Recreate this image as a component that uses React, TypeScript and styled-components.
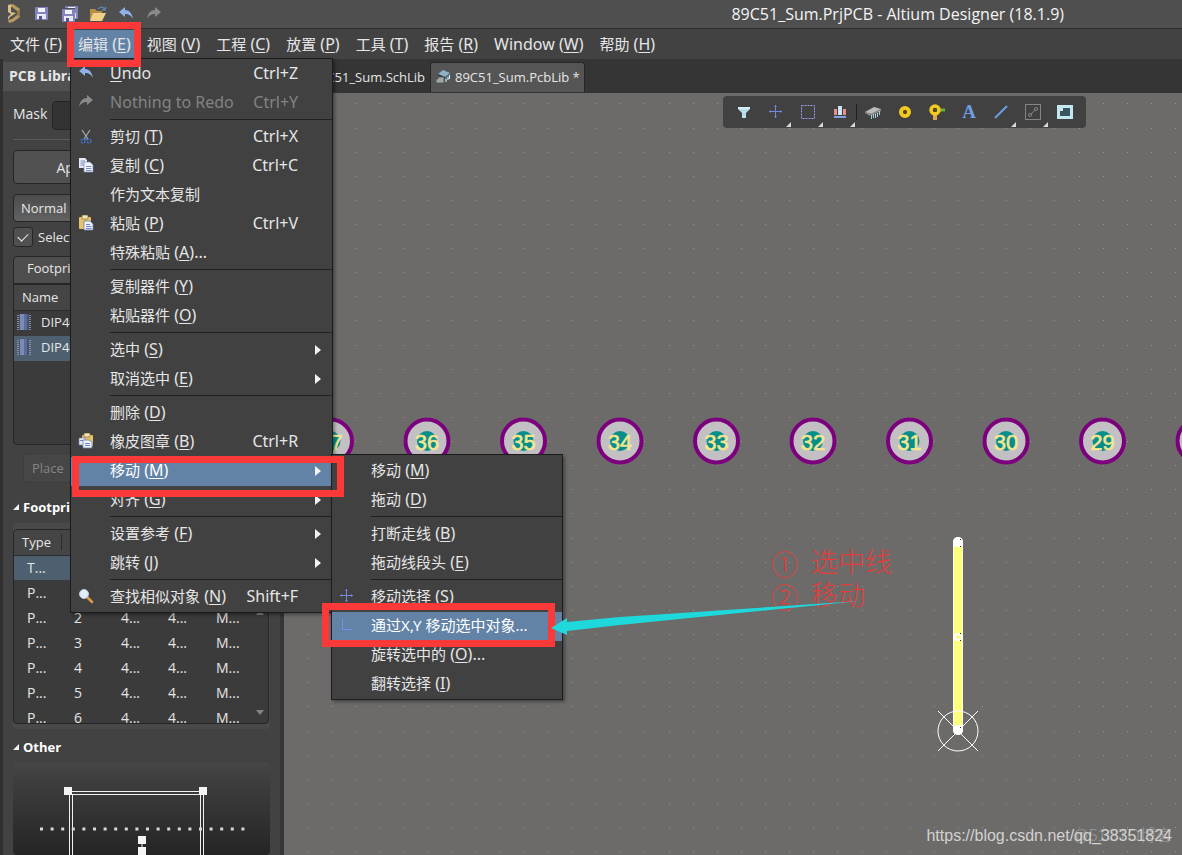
import React from "react";
import styled, { createGlobalStyle, css } from "styled-components";

const GlobalStyle = createGlobalStyle`
  * { box-sizing: border-box; }
  body { margin: 0; background: #353535; }
  button, input, select { font: inherit; color: inherit; }
  u { text-underline-offset: 2px; }
`;

const uiFont = `"Open Sans", "Noto Sans CJK SC", sans-serif`;
const menuFont = `"Noto Sans", "Noto Sans CJK SC", sans-serif`;

const Window = styled.div`
  position: relative;
  display: flex;
  flex-direction: column;
  height: 100vh;
  overflow: hidden;
  background: #353535;
  color: #e6e6e6;
  font-family: ${uiFont};
  font-size: 13px;
`;

/* ---------- title bar ---------- */

const TitleBar = styled.header`
  display: flex;
  flex: none;
  align-items: center;
  justify-content: space-between;
  height: 29px;
  padding-right: 118px;
  background: #4f4f4f;
  border-bottom: 1px solid #2e2e2e;
`;

const QuickAccess = styled.div`
  display: flex;
`;

const IconButton = styled.button`
  display: flex;
  align-items: center;
  justify-content: center;
  width: 28px;
  height: 28px;
  padding: 0;
  border: 0;
  background: none;
`;

const Title = styled.h1`
  margin: 0;
  font-size: 16px;
  line-height: 28px;
  font-weight: 400;
  color: #f4f4f4;
  white-space: nowrap;
`;

/* ---------- menu bar and menus ---------- */

const MenuBar = styled.nav`
  display: flex;
  flex: none;
  align-items: center;
  height: 30px;
  padding-left: 3px;
  background: #424242;
  font-family: ${menuFont};
`;

const MenuSlot = styled.div`
  position: relative;
  margin-right: 2px;
`;

const MenuTitle = styled.button<{ $open?: boolean }>`
  display: block;
  height: 28px;
  padding: 0 7px;
  border: 0;
  background: ${(p) => (p.$open ? "#6283a6" : "none")};
  font-size: 16px;
  line-height: 28px;
  white-space: nowrap;
`;

const Han = styled.span`
  font-size: 15px;
`;

const MenuPanel = styled.div<{ $sub?: boolean }>`
  position: absolute;
  z-index: 5;
  top: ${(p) => (p.$sub ? "-3px" : "28px")};
  left: ${(p) => (p.$sub ? "260px" : "-1px")};
  width: ${(p) => (p.$sub ? "232px" : "263px")};
  padding: ${(p) => (p.$sub ? "2px 0 0" : "1px 0 0")};
  background: #414141;
  border: 1px solid #1c1c1c;
  box-shadow: 2px 2px 3px rgba(0, 0, 0, 0.35);
  text-align: left;
`;

const MenuRow = styled.div`
  position: relative;
`;

const MenuItem = styled.button<{ $active?: boolean; $off?: boolean }>`
  display: grid;
  grid-template-columns: 39px 1fr auto 34px;
  align-items: center;
  width: 100%;
  height: 29px;
  padding: 0;
  border: 0;
  background: ${(p) => (p.$active ? "#6283a6" : "none")};
  color: ${(p) => (p.$off ? "#838383" : p.$active ? "#ffffff" : "#e6e6e6")};
  font-size: 16px;
  text-align: left;
  white-space: nowrap;
`;

const ItemText = styled.span`
  height: 29px;
  line-height: 26px;
`;

const ItemIcon = styled.span`
  display: flex;
  justify-content: center;
  padding: 0 10px 3px 0;
`;

const ItemArrow = styled.span`
  display: flex;
  padding: 0 0 2px 17px;
`;

const Divider = styled.hr`
  height: 5px;
  margin: 0 0 0 39px;
  border: 0;
  border-top: 1px solid #222222;
  transform: translateY(1px);
`;

/* ---------- body ---------- */

const Workspace = styled.main`
  display: flex;
  flex: 1;
  min-height: 0;
`;

const Panel = styled.aside`
  display: flex;
  flex: none;
  flex-direction: column;
  width: 284px;
  padding-top: 3px;
  background: #424242;
  border-left: 3px solid #303030;
  border-right: 4px solid #363636;
  white-space: nowrap;
`;

const PanelTitle = styled.h2`
  margin: 0;
  padding-left: 6px;
  height: 29px;
  background: #515151;
  font-size: 14px;
  line-height: 28px;
  font-weight: 700;
`;

const PanelBody = styled.div`
  display: flex;
  flex: 1;
  flex-direction: column;
  min-height: 0;
  padding: 10px 10px 0;
`;

const MaskRow = styled.label`
  display: flex;
  gap: 5px;
  height: 39px;
  padding-bottom: 9px;
  line-height: 26px;
  border-bottom: 1px solid #5a5a5a;
  font-size: 14px;
`;

const MaskInput = styled.input`
  flex: 1;
  min-width: 0;
  background: #333333;
  border: 1px solid #242424;
  border-radius: 4px;
`;

const ButtonRow = styled.div`
  display: flex;
  gap: 10px;
  padding: 10px 0;
`;

const PanelButton = styled.button`
  flex: 1;
  height: 34px;
  padding: 0 8px;
  border: 1px solid #262626;
  border-radius: 4px;
  background: #515151;
  font-size: 14px;
`;

const FootprintAction = styled.button`
  height: 30px;
  padding: 0 8px;
  border: 1px solid #3c3c3c;
  border-radius: 4px;
  background: #464646;
  color: #858585;
  font-size: 13px;
`;

const ModeSelect = styled.select`
  appearance: none;
  height: 28px;
  padding: 0 7px;
  border: 1px solid #262626;
  border-radius: 4px;
  background: linear-gradient(#4c4c4c, #626262);
  font-size: 13px;
`;

const CheckRow = styled.label`
  display: flex;
  align-items: center;
  gap: 5px;
  height: 20px;
  margin: 5px 0 9px;
`;

const CheckBox = styled.input`
  appearance: none;
  width: 20px;
  height: 20px;
  margin: 0;
  border: 1px solid #262626;
  border-radius: 3px;
  background: #505050;
  display: grid;
  place-items: center;
  &:checked::before {
    content: "";
    width: 9px;
    height: 5px;
    margin-bottom: 3px;
    border-left: 1px solid #f0f0f0;
    border-bottom: 1px solid #f0f0f0;
    transform: rotate(-45deg);
  }
`;

const GroupTitle = styled.h3`
  margin: 0;
  height: 28px;
  padding-left: 13px;
  background: #4e4e4e;
  border: 1px solid #262626;
  border-radius: 4px 4px 0 0;
  font-size: 13px;
  line-height: 23px;
  font-weight: 400;
`;

const listFrame = css`
  overflow: hidden;
  background: #3b3b3b;
  border: 1px solid #262626;
  border-radius: 0 0 4px 4px;
`;

const NameList = styled.div`
  ${listFrame}
  height: 161px;
  flex: none;
`;

const DataTable = styled.table`
  width: 100%;
  border-collapse: collapse;
  table-layout: fixed;
  font-size: 14px;
  th, td { height: 25px; padding: 0; font-weight: 400; text-align: left; line-height: 24px; }
  thead tr { background: #454545; }
  th { border-bottom: 1px solid #2c2c2c; }
`;

const NameHead = styled.th`
  && { padding-left: 8px; font-size: 13px; }
`;

const TypeLabel = styled.span`
  display: block;
  width: 40px;
  height: 16px;
  border-right: 1px solid #2c2c2c;
  line-height: 16px;
`;

const BodyRow = styled.tr<{ $selected?: boolean }>`
  background: ${(p) => (p.$selected ? "#4e6070" : "none")};
`;

const NameCell = styled.div`
  display: flex;
  align-items: center;
  gap: 9px;
  height: 25px;
  padding: 0 0 2px 2px;
  font-size: 13px;
`;

const PlaceRow = styled.div`
  display: flex;
  gap: 8px;
  padding: 8px 10px 12px;
`;

const SectionTitle = styled.h3`
  display: flex;
  align-items: center;
  gap: 4px;
  flex: none;
  height: 24px;
  margin: 0;
  font-size: 13px;
  font-weight: 700;
  color: #ffffff;
`;

const PrimitiveFrame = styled.div`
  flex: none;
  padding: 6px 1px 5px 0;
  margin: 4px 0 6px;
  background: #494949;
  border-radius: 4px;
`;

const PrimitiveList = styled.div`
  ${listFrame}
  display: flex;
  height: 195px;
  border-radius: 4px;
`;

const PrimitiveScroll = styled.div`
  display: flex;
  flex: none;
  flex-direction: column;
  justify-content: space-between;
  align-items: center;
  width: 17px;
  padding: 80px 0 7px;
`;

const PrimitiveCell = styled.td`
  && { padding-left: 13px; }
`;

const Preview = styled.div`
  flex: 1;
  min-height: 0;
  margin-top: 4px;
  overflow: hidden;
  background: linear-gradient(#484848 0, #424242 6px, #222222 100px);
  border-radius: 4px;
`;

const Documents = styled.section`
  display: flex;
  flex: 1;
  flex-direction: column;
  min-width: 0;
`;

const Tabs = styled.div`
  display: flex;
  align-items: flex-end;
  height: 34px;
  flex: none;
  padding-bottom: 1px;
`;

const Tab = styled.button<{ $active?: boolean }>`
  display: flex;
  align-items: center;
  gap: 4px;
  height: 30px;
  padding: 0 4px 2px;
  border: 1px solid ${(p) => (p.$active ? "#262626" : "transparent")};
  border-bottom: 0;
  border-radius: 3px 3px 0 0;
  background: ${(p) => (p.$active ? "#555555" : "none")};
  font-size: 13px;
  white-space: nowrap;
  ${(p) => !p.$active && "width: 146px; justify-content: flex-end;"}
`;

const Board = styled.div`
  position: relative;
  flex: 1;
  min-height: 0;
  overflow: hidden;
  background: #6c6b69;
`;

const BoardDrawing = styled.svg`
  display: block;
  width: 100%;
  height: 100%;
`;

const FloatingBar = styled.div`
  position: absolute;
  top: 3px;
  right: 96px;
  display: flex;
  height: 32px;
  padding: 0 5px;
  background: #414141;
  border-radius: 4px;
`;

const ToolButton = styled.button<{ $more?: boolean; $split?: boolean }>`
  position: relative;
  display: flex;
  align-items: center;
  justify-content: center;
  width: 32px;
  height: 32px;
  padding: 0;
  border: 0;
  background: none;
  ${(p) =>
    p.$more &&
    css`
      &::after {
        content: "";
        position: absolute;
        right: 1px;
        bottom: 1px;
        border-left: 5px solid transparent;
        border-bottom: 5px solid #d8d8d8;
      }
    `}
  ${(p) =>
    p.$split &&
    css`
      margin-right: 1px;
      &::before {
        content: "";
        position: absolute;
        right: -1px;
        top: 8px;
        height: 16px;
        border-right: 1px solid #202020;
      }
    `}
`;

/* ---------- annotations over the window ---------- */

const Highlight = styled.div<{ $x: number; $y: number; $w: number; $h: number }>`
  position: absolute;
  z-index: 10;
  left: ${(p) => p.$x}px;
  top: ${(p) => p.$y}px;
  width: ${(p) => p.$w}px;
  height: ${(p) => p.$h}px;
  border: 7px solid #fb3939;
  pointer-events: none;
`;

const ArrowLayer = styled.svg`
  position: absolute;
  z-index: 11;
  left: 550px;
  top: 595px;
  pointer-events: none;
`;

const Notes = styled.ol`
  position: absolute;
  z-index: 9;
  left: 771px;
  top: 547px;
  margin: 0;
  padding: 0;
  list-style: none;
  color: #e23c3c;
  font-family: "Liberation Serif", "Noto Sans CJK SC", serif;
  font-size: 27px;
  line-height: 33px;
  font-weight: 300;
`;

const Note = styled.li`
  display: flex;
  gap: 13px;
`;

const NoteMark = styled.span`
  font-family: "Noto Sans CJK SC", sans-serif;
`;

const Watermark = styled.div`
  position: absolute;
  z-index: 9;
  right: 10px;
  bottom: 7px;
  color: #d2d2d2;
  font-family: "Liberation Sans", "Noto Sans CJK SC", sans-serif;
  font-size: 16px;
  line-height: 24px;
`;

const Ghost = styled(Watermark)`
  z-index: 8;
  color: #8f8e8c;
`;

/* ---------- icons ---------- */

const Svg = ({ children, w = 16, h = 16 }: { children: React.ReactNode; w?: number; h?: number }) => (
  <svg width={w} height={h} viewBox={`0 0 ${w} ${h}`} fill="none" aria-hidden="true">
    {children}
  </svg>
);

const LogoIcon = () => (
  <Svg w={16} h={20}>
    <path d="M2 1L7 0L14 5V13L7 18L3 19L2 16L6 15L11 11V7L6 3L2 4Z" fill="#b89a5e" />
    <path d="M2 1L5 0.500V8L10 9L4 13L2 16V13L5 10L2 8Z" fill="#d9bf84" />
    <path d="M11 7L14 5V13L11 11Z" fill="#94794a" />
  </Svg>
);

const Floppy = ({ x, y }: { x: number; y: number }) => (
  <g transform={`translate(${x} ${y})`}>
    <rect width="13" height="13" rx="1" fill="#8583bd" />
    <rect x="3" y="1" width="7" height="4" fill="#f2f2fa" />
    <rect x="2" y="7" width="9" height="5" fill="#e8e8f6" />
    <rect x="4" y="9" width="3" height="4" fill="#55558c" />
  </g>
);

const SaveIcon = () => (
  <Svg>
    <Floppy x={1} y={1} />
  </Svg>
);

const SaveAllIcon = () => (
  <Svg w={18} h={18}>
    <Floppy x={4} y={1} />
    <path d="M0 3H14V17H0Z" fill="#4f4f4f" />
    <Floppy x={1} y={4} />
  </Svg>
);

const FolderIcon = () => (
  <Svg w={18}>
    <path d="M1 3H6L8 5H13V14H1Z" fill="#b98f45" />
    <path d="M4 7H17L13 15H1Z" fill="#f0cf86" />
    <path d="M9 3C12 0 15 1 16 4M16 4L17 1M16 4L13 4" stroke="#5d86a8" strokeWidth="1.300" />
  </Svg>
);

const UndoIcon = () => (
  <Svg>
    <path d="M1 6L7 1V4C11 4 14 7 15 13C13 9.500 11 8 7 8V11Z" fill="#8fb0e8" />
  </Svg>
);

const RedoIcon = () => (
  <Svg>
    <path d="M15 6L9 1V4C5 4 2 7 1 13C3 9.500 5 8 9 8V11Z" fill="#8a8a8a" />
  </Svg>
);

const CutIcon = () => (
  <Svg>
    <path d="M4 2L10 11M12 2L6 11" stroke="#a9adb3" strokeWidth="1.200" />
    <circle cx="5" cy="13" r="2" stroke="#4474c8" strokeWidth="1.400" strokeDasharray="2 1" />
    <circle cx="11" cy="13" r="2" stroke="#4474c8" strokeWidth="1.400" strokeDasharray="2 1" />
    <path d="M8 9V12" stroke="#4474c8" strokeWidth="1.400" />
  </Svg>
);

const CopyIcon = () => (
  <Svg>
    <path d="M1 1H7L9 3V11H1Z" fill="#e6ebf7" />
    <path d="M2.500 4H7M2.500 6H7M2.500 8H7" stroke="#8493bd" />
    <path d="M6 5H12L15 8V15H6Z" fill="#f1f4fb" stroke="#7d8cb4" strokeWidth="0.700" />
    <path d="M8 9.500H13.500M8 11.500H13.500M8 13.500H13.500" stroke="#7f90c0" />
  </Svg>
);

const PasteIcon = () => (
  <Svg>
    <rect x="1" y="2" width="12" height="12" rx="1" fill="#e7c26c" />
    <rect x="4" y="0" width="6" height="4" rx="1" fill="#f2e6bd" stroke="#8b7337" strokeWidth="0.800" />
    <path d="M6 6H12L15 9V15H6Z" fill="#eff3fb" stroke="#7082ac" strokeWidth="0.800" />
    <path d="M8 9.500H12M8 11.500H13.500M8 13.500H13.500" stroke="#6d83c2" />
  </Svg>
);

const StampIcon = () => (
  <Svg>
    <rect x="4" y="2" width="11" height="11" rx="1" fill="#e7c26c" />
    <rect x="6" y="0" width="6" height="4" rx="1" fill="#f2e6bd" stroke="#8b7337" strokeWidth="0.800" />
    <path d="M1 5H7V12H1Z" fill="#e6ebf7" stroke="#7082ac" strokeWidth="0.700" />
    <path d="M5 7H11L14 9V15H5Z" fill="#eff3fb" stroke="#7082ac" strokeWidth="0.800" />
    <path d="M7 10.500H12M7 12.500H12M2 7.500H5" stroke="#6d83c2" />
  </Svg>
);

const FindIcon = () => (
  <Svg>
    <path d="M9 9L14 14" stroke="#d99b3f" strokeWidth="2.600" strokeLinecap="round" />
    <circle cx="6" cy="6" r="4.500" fill="#e4eefb" stroke="#bccbe0" />
  </Svg>
);

const CrossIcon = () => (
  <Svg>
    <path d="M7.500 1V14M1 7.500H14" stroke="#7189dc" />
    <path d="M6 2.500H9M6 12.500H9M2.500 6V9M12.500 6V9" stroke="#7189dc" strokeWidth="0.600" />
  </Svg>
);

const AxisIcon = () => (
  <Svg>
    <path d="M3.500 2V12.500H13" stroke="#7492e4" />
  </Svg>
);

const ArrowRight = () => (
  <Svg w={6} h={10}>
    <path d="M0 0L6 5L0 10Z" fill="#f2f2f2" />
  </Svg>
);

const ChipIcon = () => (
  <Svg w={16} h={18}>
    <path d="M2.500 2V17M13.500 2V17" stroke="#8d9099" strokeWidth="3" strokeDasharray="1 1" />
    <rect x="3" y="1" width="10" height="16" fill="#43527c" />
    <rect x="4" y="1" width="4" height="16" fill="#7c8bb4" />
    <rect x="8" y="1" width="3" height="16" fill="#5c6c98" />
  </Svg>
);

const FoldIcon = () => (
  <Svg w={6} h={6}>
    <path d="M6 0V6H0Z" fill="#f4f4f4" />
  </Svg>
);

const FootprintIcon = () => (
  <Svg>
    <path d="M3 5L8 1L15 4L10 8Z" fill="#8fb3c6" />
    <path d="M10 8L15 4V8L10 13Z" fill="#4e7387" />
    <path d="M3 5L10 8V10L3 7Z" fill="#33424a" />
    <path d="M11 10V13M13 8V11M14.500 6V10" stroke="#e4eef2" />
    <path d="M1 14V10H3V8H9V14Z" fill="#a2a6a8" stroke="#4c4f51" strokeWidth="0.800" />
  </Svg>
);

const FilterIcon = () => (
  <Svg>
    <path d="M2 3H14V5L10 9V14H6V9L2 5Z" fill="#b7dfe9" />
    <path d="M2 3H14V5H2Z" fill="#d7eff4" />
  </Svg>
);

const SelectIcon = () => (
  <Svg>
    <rect x="1.500" y="1.500" width="13" height="13" stroke="#96a0ee" strokeDasharray="2 1" />
  </Svg>
);

const AlignIcon = () => (
  <Svg>
    <rect x="2" y="5" width="3" height="6" fill="#e88c8c" />
    <rect x="6" y="2" width="4" height="9" fill="#c8e4f4" />
    <rect x="11" y="5" width="3" height="6" fill="#e88c8c" />
    <rect x="2" y="12" width="12" height="2" fill="#7fa3e0" />
  </Svg>
);

const ComponentIcon = () => (
  <Svg>
    <path d="M0 8L9 3L16 5L6 10Z" fill="#bcbcbc" />
    <path d="M0 8V9L5 12L6 10ZM6 10V12L16 7V5Z" fill="#8d8d8d" />
    <path d="M6.500 11V15M8.500 10V14M10.500 10V14M12.500 9V13M14.500 7V11" stroke="#a9cfdc" />
  </Svg>
);

const PadIcon = () => (
  <Svg>
    <circle cx="8" cy="8" r="4" stroke="#f2cb1e" strokeWidth="4" />
    <circle cx="8" cy="8" r="2" fill="#5a4a12" />
  </Svg>
);

const ViaIcon = () => (
  <Svg w={18} h={18}>
    <path d="M9 7H17" stroke="#69b53a" strokeWidth="3" />
    <path d="M7 9V17" stroke="#e2a25a" strokeWidth="4" />
    <circle cx="7" cy="7" r="4" stroke="#f2cb1e" strokeWidth="3.500" />
    <circle cx="7" cy="7" r="2" fill="#5a4a12" />
  </Svg>
);

const LetterMark = styled.span`
  color: #6d9de6;
  font-family: "Liberation Serif", serif;
  font-size: 19px;
  line-height: 32px;
  font-weight: 700;
`;

const LineIcon = () => (
  <Svg>
    <path d="M2 14L14 2" stroke="#6d9de6" strokeWidth="2" />
  </Svg>
);

const RouteIcon = () => (
  <Svg>
    <rect x="0.500" y="0.500" width="15" height="15" stroke="#858585" />
    <circle cx="5" cy="11" r="1.500" stroke="#858585" />
    <circle cx="11" cy="5" r="1.500" stroke="#858585" />
    <path d="M6 10L10 6" stroke="#858585" />
  </Svg>
);

const BoardIcon = () => (
  <Svg>
    <rect x="0" y="1" width="16" height="14" fill="#c3e8f2" />
    <path d="M3 7H6V4H13V12H3Z" fill="#3b5560" />
  </Svg>
);

/* ---------- data ---------- */

type Entry =
  | "---"
  | { text: string; mnemonic?: string; tail?: string; first?: string; keys?: string; icon?: React.ReactNode; more?: boolean; off?: boolean; active?: boolean };

const moveMenu: Entry[] = [
  { text: "移动", mnemonic: "M" },
  { text: "拖动", mnemonic: "D" },
  "---",
  { text: "打断走线", mnemonic: "B" },
  { text: "拖动线段头", mnemonic: "E" },
  "---",
  { text: "移动选择", mnemonic: "S", icon: <CrossIcon /> },
  { text: "通过X,Y 移动选中对象...", icon: <AxisIcon />, active: true },
  { text: "旋转选中的", mnemonic: "O", tail: "..." },
  { text: "翻转选择", mnemonic: "I" },
];

const editMenu: Entry[] = [
  { first: "U", text: "ndo", keys: "Ctrl+Z", icon: <UndoIcon /> },
  { text: "Nothing to Redo", keys: "Ctrl+Y", icon: <RedoIcon />, off: true },
  "---",
  { text: "剪切", mnemonic: "T", keys: "Ctrl+X", icon: <CutIcon /> },
  { text: "复制", mnemonic: "C", keys: "Ctrl+C", icon: <CopyIcon /> },
  { text: "作为文本复制" },
  { text: "粘贴", mnemonic: "P", keys: "Ctrl+V", icon: <PasteIcon /> },
  { text: "特殊粘贴", mnemonic: "A", tail: "..." },
  "---",
  { text: "复制器件", mnemonic: "Y" },
  { text: "粘贴器件", mnemonic: "O" },
  "---",
  { text: "选中", mnemonic: "S", more: true },
  { text: "取消选中", mnemonic: "E", more: true },
  "---",
  { text: "删除", mnemonic: "D" },
  { text: "橡皮图章", mnemonic: "B", keys: "Ctrl+R", icon: <StampIcon /> },
  { text: "移动", mnemonic: "M", more: true, active: true },
  { text: "对齐", mnemonic: "G", more: true },
  "---",
  { text: "设置参考", mnemonic: "F", more: true },
  { text: "跳转", mnemonic: "J", more: true },
  "---",
  { text: "查找相似对象", mnemonic: "N", keys: "Shift+F", icon: <FindIcon /> },
];

const menuTitles: [string, string][] = [
  ["文件", "F"],
  ["编辑", "E"],
  ["视图", "V"],
  ["工程", "C"],
  ["放置", "P"],
  ["工具", "T"],
  ["报告", "R"],
  ["Window", "W"],
  ["帮助", "H"],
];

/* Chinese labels are set one step smaller than Latin ones. */
const Label = ({ text }: { text: string }) => (/[\u4e00-\u9fff]/.test(text) ? <Han>{text}</Han> : <>{text}</>);

const MenuList = ({ entries, sub }: { entries: Entry[]; sub?: boolean }) => (
  <MenuPanel $sub={sub} role="menu">
    {entries.map((e, i) =>
      e === "---" ? (
        <Divider key={i} />
      ) : (
        <MenuRow key={i}>
          <MenuItem role="menuitem" $active={e.active} $off={e.off} disabled={e.off}>
            <ItemIcon>{e.icon}</ItemIcon>
            <ItemText>
              {e.first && <u>{e.first}</u>}
              <Label text={e.text} />
              {e.mnemonic && (
                <>
                  {" ("}
                  <u>{e.mnemonic}</u>)
                </>
              )}
              {e.tail}
            </ItemText>
            <ItemText>{e.keys}</ItemText>
            <ItemArrow>{e.more && <ArrowRight />}</ItemArrow>
          </MenuItem>
          {e.more && e.active && <MenuList entries={moveMenu} sub />}
        </MenuRow>
      ),
    )}
  </MenuPanel>
);

/* Board coordinates: the grid is anchored on the origin marker. */
const origin = { x: 674, y: 637.5 };
const pitch = 24.12;
const gridPath = (() => {
  let d = "";
  for (let c = -27; c < 60; c++)
    for (let r = -26; r < 30; r++)
      d += `M${Math.round(origin.x + c * pitch)} ${Math.round(origin.y + r * pitch)}h1v1h-1z`;
  return d;
})();

const pads = [37, 36, 35, 34, 33, 32, 31, 30, 29, 28];

const Pad = ({ n, x }: { n: number; x: number }) => (
  <g transform={`translate(${x} 348)`}>
    <circle r="21.500" fill="#c3c0c3" stroke="#7c007e" strokeWidth="4" />
    <circle r="10" fill="#068f8a" />
    <text
      y="9"
      textAnchor="middle"
      fontFamily='"Liberation Sans", sans-serif'
      fontSize="22"
      fill="#f5e593"
      stroke="#f5e593"
      strokeWidth="0.600"
    >
      {n}
    </text>
  </g>
);

const primitives = [
  ["T...", "", "", "", ""],
  ["P...", "1", "4...", "4...", "M..."],
  ["P...", "2", "4...", "4...", "M..."],
  ["P...", "3", "4...", "4...", "M..."],
  ["P...", "4", "4...", "4...", "M..."],
  ["P...", "5", "4...", "4...", "M..."],
  ["P...", "6", "4...", "4...", "M..."],
];

const tools: { name: string; icon: React.ReactNode; more?: boolean; split?: boolean }[] = [
  { name: "Filter", icon: <FilterIcon /> },
  { name: "Move", icon: <CrossIcon />, more: true },
  { name: "Select", icon: <SelectIcon />, more: true },
  { name: "Align", icon: <AlignIcon />, more: true, split: true },
  { name: "Component", icon: <ComponentIcon /> },
  { name: "Pad", icon: <PadIcon /> },
  { name: "Via", icon: <ViaIcon /> },
  { name: "String", icon: <LetterMark>A</LetterMark> },
  { name: "Line", icon: <LineIcon />, more: true },
  { name: "Route", icon: <RouteIcon />, more: true },
  { name: "Board", icon: <BoardIcon /> },
];

const quick: [string, React.ReactNode][] = [
  ["Altium", <LogoIcon />],
  ["Save", <SaveIcon />],
  ["Save all", <SaveAllIcon />],
  ["Open", <FolderIcon />],
  ["Undo", <UndoIcon />],
  ["Redo", <RedoIcon />],
];

export default function App() {
  return (
    <Window>
      <GlobalStyle />
      <TitleBar>
        <QuickAccess>
          {quick.map(([name, icon]) => (
            <IconButton key={name} aria-label={name}>
              {icon}
            </IconButton>
          ))}
        </QuickAccess>
        <Title>89C51_Sum.PrjPCB - Altium Designer (18.1.9)</Title>
      </TitleBar>

      <MenuBar>
        {menuTitles.map(([text, key]) => (
          <MenuSlot key={key}>
            <MenuTitle $open={key === "E"}>
              <Label text={text} /> (<u>{key}</u>)
            </MenuTitle>
            {key === "E" && <MenuList entries={editMenu} />}
          </MenuSlot>
        ))}
      </MenuBar>

      <Workspace>
        <Panel>
          <PanelTitle>PCB Library</PanelTitle>
          <PanelBody>
            <MaskRow>
              Mask
              <MaskInput type="text" />
            </MaskRow>
            <ButtonRow>
              <PanelButton>Apply</PanelButton>
              <PanelButton>Clear</PanelButton>
            </ButtonRow>
            <ModeSelect aria-label="Mode" defaultValue="Normal">
              <option>Normal</option>
            </ModeSelect>
            <CheckRow>
              <CheckBox type="checkbox" defaultChecked />
              Select
            </CheckRow>
            <GroupTitle>Footprints</GroupTitle>
            <NameList>
              <DataTable>
                <thead>
                  <tr>
                    <NameHead>Name</NameHead>
                  </tr>
                </thead>
                <tbody>
                  {[false, true].map((selected, i) => (
                    <BodyRow key={i} $selected={selected}>
                      <td>
                        <NameCell>
                          <ChipIcon />
                          DIP40
                        </NameCell>
                      </td>
                    </BodyRow>
                  ))}
                </tbody>
              </DataTable>
            </NameList>
            <PlaceRow>
              <FootprintAction disabled>Place</FootprintAction>
              <FootprintAction disabled>Add</FootprintAction>
              <FootprintAction disabled>Delete</FootprintAction>
            </PlaceRow>
            <SectionTitle>
              <FoldIcon />
              Footprint Primitives
            </SectionTitle>
            <PrimitiveFrame>
              <PrimitiveList>
                <DataTable>
                  <colgroup>
                    <col width="47" />
                    <col width="47" />
                    <col width="47" />
                    <col width="48" />
                    <col />
                  </colgroup>
                  <thead>
                    <tr>
                      <NameHead>
                        <TypeLabel>Type</TypeLabel>
                      </NameHead>
                      <th />
                      <th />
                      <th />
                      <th />
                    </tr>
                  </thead>
                  <tbody>
                    {primitives.map((row, i) => (
                      <BodyRow key={i} $selected={i === 0}>
                        {row.map((cell, j) => (
                          <PrimitiveCell key={j}>{cell}</PrimitiveCell>
                        ))}
                      </BodyRow>
                    ))}
                  </tbody>
                </DataTable>
                <PrimitiveScroll>
                  <Svg w={8} h={6}>
                    <path d="M0 5H8L4 0Z" fill="#858585" />
                  </Svg>
                  <Svg w={8} h={6}>
                    <path d="M0 0H8L4 5Z" fill="#858585" />
                  </Svg>
                </PrimitiveScroll>
              </PrimitiveList>
            </PrimitiveFrame>
            <SectionTitle>
              <FoldIcon />
              Other
            </SectionTitle>
            <Preview>
              <svg width="257" height="300" viewBox="0 0 257 300" fill="none">
                <path d="M56.500 30V300M59.500 32V300M187.500 32V300M190.500 30V300M58 28.500H188M58 31.500H188" stroke="#f0f0f0" />
                <path d="M51 24h8v8h-8zM186 24h8v8h-8zM125 73h8v8h-8zM125 84h8v8h-8z" fill="#f4f4f4" />
                <path d="M129 80V85" stroke="#f4f4f4" />
                <path d="M27 66H234" stroke="#d8d8d8" strokeWidth="3" strokeDasharray="3 7.600" />
              </svg>
            </Preview>
          </PanelBody>
        </Panel>

        <Documents>
          <Tabs>
            <Tab>89C51_Sum.SchLib</Tab>
            <Tab $active>
              <FootprintIcon />
              89C51_Sum.PcbLib *
            </Tab>
          </Tabs>
          <Board>
            <BoardDrawing fill="none">
              <path d={gridPath} fill="#979693" />
              {pads.map((n, i) => (
                <Pad key={n} n={n} x={46.5 + i * 96.5} />
              ))}
              <path d="M674 449V637" stroke="#fdfdf0" strokeWidth="10" strokeLinecap="round" />
              <path d="M674 454V632" stroke="#fdfd7e" strokeWidth="8" />
              <circle cx="674" cy="449" r="5" fill="#ffffff" />
              <circle cx="674" cy="544" r="3" stroke="#ffffff" strokeWidth="2" />
              <circle cx="674" cy="637" r="5" fill="#ffffff" />
              <path d="M676 446h1v1h-1zM676 453h1v1h-1zM676 540h1v1h-1zM676 547h1v1h-1zM676 634h1v1h-1zM669 641h1v1h-1z" fill="#222222" />
              <circle cx="674" cy="638" r="20" stroke="#ffffff" />
              <path d="M654 618L694 658M694 618L654 658" stroke="#ffffff" />
            </BoardDrawing>
            <FloatingBar>
              {tools.map((t) => (
                <ToolButton key={t.name} aria-label={t.name} $more={t.more} $split={t.split}>
                  {t.icon}
                </ToolButton>
              ))}
            </FloatingBar>
            <Ghost>@51CTO博客</Ghost>
            <Watermark>https://blog.csdn.net/qq_38351824</Watermark>
          </Board>
        </Documents>
      </Workspace>

      <Notes>
        <Note>
          <NoteMark>①</NoteMark>选中线
        </Note>
        <Note>
          <NoteMark>②</NoteMark>移动
        </Note>
      </Notes>
      <Highlight $x={67} $y={22} $w={74} $h={45} />
      <Highlight $x={72} $y={456} $w={272} $h={41} />
      <Highlight $x={322} $y={603} $w={233} $h={44} />
      <ArrowLayer width="312" height="44" viewBox="0 0 312 44" aria-hidden="true">
        <path d="M1 33L17 23V27L70 22L310 6L70 30L17 36V40Z" fill="#1fd8dc" />
      </ArrowLayer>
    </Window>
  );
}
